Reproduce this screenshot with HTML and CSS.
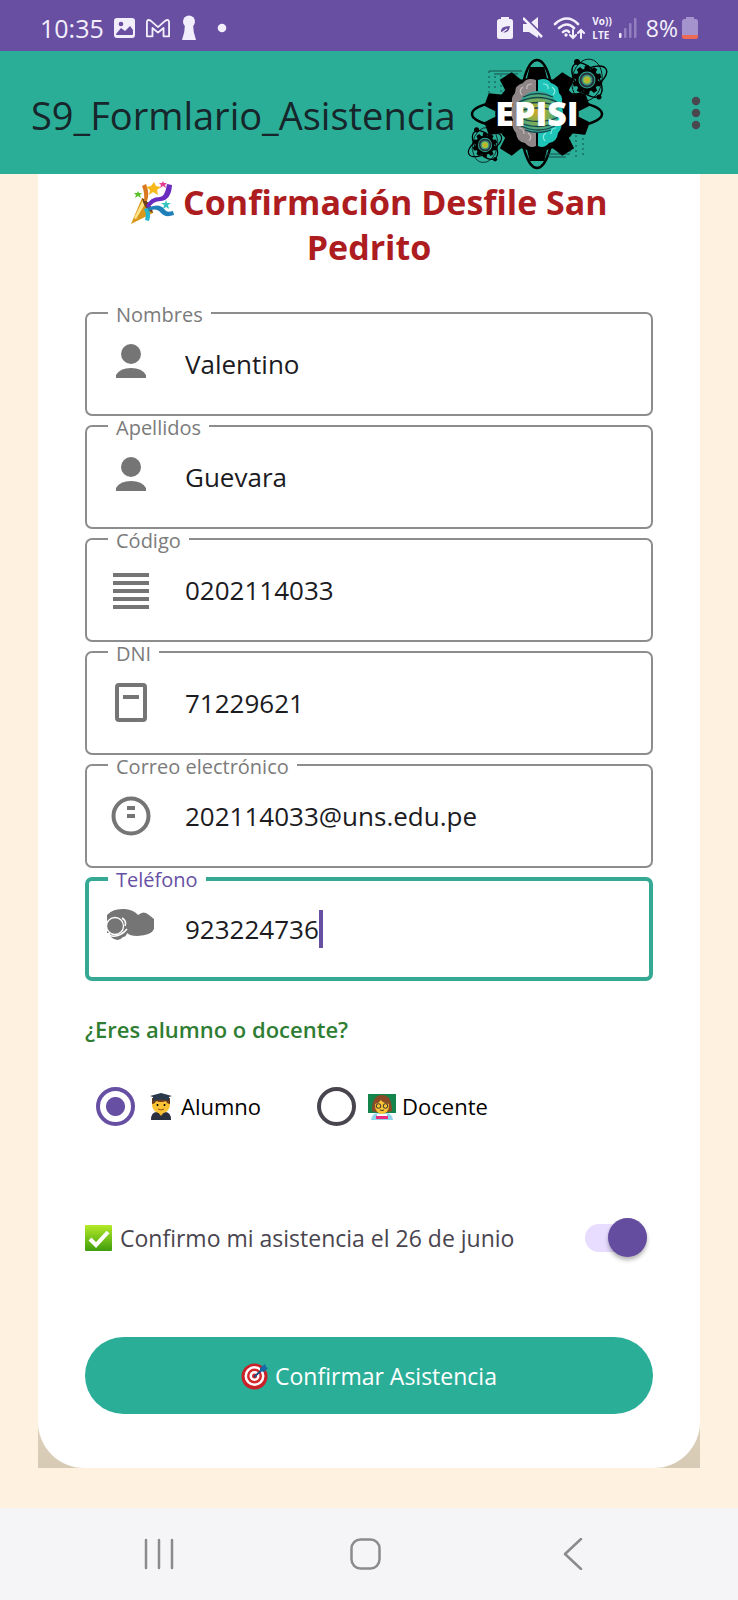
FILE: index.html
```html
<!DOCTYPE html>
<html lang="es">
<head>
<meta charset="utf-8">
<meta name="viewport" content="width=device-width, initial-scale=1">
<title>S9_Formlario_Asistencia</title>
<link rel="stylesheet" href="styles.css">
</head>
<body>
<div class="status-bar">
  <div class="status-left">
    <span class="clock">10:35</span>
    <svg class="st-image" width="22" height="22" viewBox="0 0 22 22"><rect x="0" y="1" width="21" height="20" rx="3" fill="#f3eefb"/><circle cx="7" cy="7" r="2.3" fill="#684fa2"/><path d="M2 17l5-6 4 3 5-5 3 4v4q0 1-1 1H3q-1 0-1-1z" fill="#684fa2"/></svg>
    <svg class="st-mail" width="24" height="22" viewBox="0 0 26 22"><path d="M1 5q0-4 4-2l8 7 8-7q4-2 4 2v15h-6v-9l-6 5-6-5v9H1z" fill="none" stroke="#f3eefb" stroke-width="2" stroke-linejoin="round"/></svg>
    <svg class="st-key" width="14" height="26" viewBox="0 0 14 26"><circle cx="7" cy="6.5" r="6" fill="#f3eefb"/><path d="M3 9h8q0 8 3 16H0q3-8 3-16z" fill="#f3eefb"/></svg>
    <svg width="10" height="10" viewBox="0 0 10 10"><circle cx="5" cy="5" r="4.3" fill="#f3eefb"/></svg>
  </div>
  <div class="status-right">
    <svg width="16" height="22" viewBox="0 0 16 22"><path d="M4 2V0h8v2h1.500q2.500 0 2.500 2.500v15q0 2.500-2.500 2.500h-11Q0 22 0 19.500v-15Q0 2 2.500 2z" fill="#f3eefb"/><path d="M4 15q-1-6 9-6-1 8-8 6z" fill="#684fa2"/><path d="M3 17l7-5" fill="none" stroke="#f3eefb" stroke-width="1.200"/></svg>
    <svg class="st-mute" width="20" height="22" viewBox="0 0 20 22"><path d="M0 7h6l9-7v21l-9-6H0z" fill="#f3eefb"/><path d="M1 0l20 20" stroke="#684fa2" stroke-width="3"/><path d="M0 1l19 19" stroke="#f3eefb" stroke-width="2.500"/></svg>
    <svg width="32" height="24" viewBox="0 0 32 24"><g fill="none" stroke="#f3eefb" stroke-width="2.600" stroke-linecap="round"><path d="M2 8q12-11 23 0M6 12q8-7 15 0M10 16q4-3 6 0"/><path d="M20 14v8m-3-3l3 3 3-3M28 22v-8m-3 3l3-3 3 3" stroke-width="2"/></g><circle cx="13" cy="19" r="1.700" fill="#f3eefb"/></svg>
    <span class="volte"><span>Vo))</span><span>LTE</span></span>
    <svg width="20" height="20" viewBox="0 0 20 20"><rect x="0" y="15" width="2.500" height="5" rx="1" fill="#f3eefb"/><g fill="#9480c0"><rect x="5" y="10" width="2.500" height="10" rx="1"/><rect x="10" y="5" width="2.500" height="15" rx="1"/><rect x="15" y="0" width="2.500" height="20" rx="1"/></g></svg>
    <span class="battery-text">8%</span>
    <svg width="16" height="22" viewBox="0 0 16 22"><path d="M4 2V0h8v2h1.500q2.500 0 2.500 2.500V19H0V4.500Q0 2 2.500 2z" fill="#a493cc"/><path d="M0 18h16v1.500q0 2.500-2.500 2.500h-11Q0 22 0 19.500z" fill="#ee6a55"/></svg>
  </div>
</div>

<header class="app-bar">
  <h1 class="app-title">S9_Formlario_Asistencia</h1>
  <svg class="logo" width="150" height="120" viewBox="0 0 150 120" role="img" aria-label="EPISI">
    <defs>
      <radialGradient id="glow"><stop offset="0" stop-color="#d6a61f"/><stop offset=".45" stop-color="#8fae48"/><stop offset="1" stop-color="#2fa79c"/></radialGradient>
      <path id="tooth" d="M-10-30L-6.500-47H6.500L10-30z"/>
      <g id="teeth"><use href="#tooth"/><use href="#tooth" transform="rotate(36)"/><use href="#tooth" transform="rotate(72)"/><use href="#tooth" transform="rotate(108)"/><use href="#tooth" transform="rotate(144)"/><use href="#tooth" transform="rotate(180)"/><use href="#tooth" transform="rotate(216)"/><use href="#tooth" transform="rotate(252)"/><use href="#tooth" transform="rotate(288)"/><use href="#tooth" transform="rotate(324)"/></g>
      <g id="atom">
        <g fill="none" stroke="#000" stroke-width="1.400"><ellipse rx="22" ry="10" transform="rotate(-30)"/><ellipse rx="20" ry="11" transform="rotate(52)"/><ellipse rx="21" ry="15" transform="rotate(100)" stroke-width=".8"/></g>
        <g transform="scale(.31)"><circle r="36"/><use href="#teeth"/></g>
        <circle r="8.500" fill="#2bae98"/><circle r="7.500" fill="#24343a"/><circle r="5.500" fill="#3f8d84"/><circle r="3.800" fill="#9fc23a"/><circle r="1.500" fill="#e3a020"/>
        <circle cx="-10" cy="-18" r="3"/><circle cx="12" cy="17" r="2.500"/>
      </g>
    </defs>
    <g fill="none" stroke="#000" stroke-width="2.500"><ellipse cx="73" cy="61" rx="17" ry="54"/><ellipse cx="73" cy="61" rx="65" ry="16"/></g>
    <g fill="none" stroke="#174f4a" stroke-width="1"><path d="M25 18h33M30 21h24M82 101h24M84 104h18"/><path d="M25 18v22M31 23v15M37 22v18M43 25v12M106 82v20M112 82v24M119 80v24" stroke-dasharray="2 3"/></g>
    <g transform="translate(73 61) scale(1.130 1)"><circle r="37"/><use href="#teeth"/></g>
    <path d="M72 27q-9-3-13 3-8 2-8 10-5 5-2 12-4 8 0 15-2 8 3 13 1 9 9 10 5 6 11 3z" fill="#8f8787"/>
    <path d="M74 27q9-3 13 3 8 2 8 10 5 5 2 12 4 8 0 15 2 8-3 13-1 9-9 10-5 6-11 3z" fill="#1fc4b8"/>
    <path d="M68 31q-6 0-5 5M59 34q-5 4-1 8M55 75q5 0 5 6M64 80q5 3 1 8" fill="none" stroke="#c5bebe" stroke-width="1.200"/>
    <path d="M79 31q6 0 5 5M88 34q5 4 1 8M92 75q-5 0-5 6M82 80q-5 3-1 8" fill="none" stroke="#8beae1" stroke-width="1.200"/>
    <circle cx="74" cy="59" r="21" fill="url(#glow)"/>
    <g fill="none" stroke="#17454a" stroke-width="1.300"><path d="M59 44q15-7 30 0M55 49q19-9 38 0M53 54q21-9 42 0M53 59q21-8 42 0M53 64q21 9 42 0M54 69q20 9 40 0M57 73q17 8 34 0M61 77q13 5 26 0"/></g>
    <text class="logo-text" x="73" y="73" text-anchor="middle">EPISI</text>
    <use href="#atom" transform="translate(123 27)"/>
    <use href="#atom" transform="translate(21 92) scale(.84)"/>
  </svg>
  <button class="menu-button" type="button" aria-label="Más opciones"><svg width="10" height="34" viewBox="0 0 10 34"><g fill="#4a474f"><circle cx="5" cy="5" r="4.200"/><circle cx="5" cy="17" r="4.200"/><circle cx="5" cy="29" r="4.200"/></g></svg></button>
</header>

<main class="page">
  <div class="card-shadow">
  <form class="card">
    <h2 class="heading"><svg class="party" width="44" height="44" viewBox="0 0 44 44"><path d="M1 43L12 17q9 5 11 15z" fill="#d99a1c"/><path d="M4 37l9-18 2 4L6 38z" fill="#ffe48a"/><path d="M12 17q9 4 11 15-9-3-11-15z" fill="#6e3f16"/><path d="M14 20q1-8-2-15l4-2q4 9 1 17z" fill="#d9791f"/><path d="M16 25q4-9 14-9 5 0 7-13l5 1q-1 15-11 16-9 0-12 8z" fill="#6a2bbf"/><path d="M17 27q13-6 18 2 2 3 8 1l1 4q-9 3-13-2-4-6-13-2z" fill="#1f7fb8"/><path d="M17 27q5 5 2 13l-4-1q2-6-1-11z" fill="#25b5cf"/><path d="M24 1l2 4 5 1-4 3 1 5-5-3-4 3 1-5-4-3 5-1z" fill="#f7b91a"/><path d="M33 0l1 2 3 0-2 2 1 3-3-2-3 2 1-3-2-2 3 0z" fill="#e63e91"/><path d="M8 10l1 2 3 0-2 2 1 3-3-2-3 2 1-3-2-2 3 0z" fill="#5cc22b"/><path d="M36 19l1 3 4 0-3 2 1 4-3-2-3 2 1-4-3-2 4 0z" fill="#33c3c0"/></svg> Confirmación Desfile San Pedrito</h2>

    <div class="fields">
      <div class="field"><label class="field-label" for="nombres">Nombres</label>
        <svg class="field-icon" viewBox="0 0 48 48"><circle cx="24" cy="14" r="10"/><path d="M9 38v-3q4-7 15-7t15 7v3z"/></svg>
        <input class="field-input" id="nombres" type="text" value="Valentino"></div>
      <div class="field"><label class="field-label" for="apellidos">Apellidos</label>
        <svg class="field-icon" viewBox="0 0 48 48"><circle cx="24" cy="14" r="10"/><path d="M9 38v-3q4-7 15-7t15 7v3z"/></svg>
        <input class="field-input" id="apellidos" type="text" value="Guevara"></div>
      <div class="field"><label class="field-label" for="codigo">Código</label>
        <svg class="field-icon" viewBox="0 0 48 48"><path d="M6 7h36v4H6zM6 15h36v4H6zM6 23h36v4H6zM6 31h36v4H6zM6 39h36v4H6z"/></svg>
        <input class="field-input" id="codigo" type="text" value="0202114033"></div>
      <div class="field"><label class="field-label" for="dni">DNI</label>
        <svg class="field-icon" viewBox="0 0 48 48"><rect x="10" y="6" width="28" height="35" rx="2" fill="none" stroke="#757575" stroke-width="4"/><path d="M16 16h16v4H16z"/></svg>
        <input class="field-input" id="dni" type="text" value="71229621"></div>
      <div class="field"><label class="field-label" for="correo">Correo electrónico</label>
        <svg class="field-icon" viewBox="0 0 48 48"><circle cx="24" cy="24" r="17.500" fill="none" stroke="#757575" stroke-width="4"/><path d="M20 14h8v4h-8zM20 22h8v4h-8z"/></svg>
        <input class="field-input" id="correo" type="email" value="202114033@uns.edu.pe"></div>
      <div class="field field-active"><label class="field-label" for="telefono">Teléfono</label>
        <svg class="field-icon" viewBox="0 0 48 48"><path d="M0 10Q6 3 18 4q9 1 13 6 6-5 11 0l5 4v10q-2 6-17 7-7 0-10-3-1 4-4 4-5 6-12 0l-1-4H0z"/><circle cx="8" cy="21" r="8.500" fill="none" stroke="#fff" stroke-width="1.300"/><path d="M0 30q12 4 20-6M15 13q5 3 3 8" fill="none" stroke="#fff" stroke-width="1.500"/></svg>
        <input class="field-input" id="telefono" type="tel" value="923224736"><span class="caret"></span></div>
    </div>

    <fieldset class="role">
      <legend class="role-title">¿Eres alumno o docente?</legend>
      <div class="role-options">
        <label class="role-option"><input class="radio" type="radio" name="rol" checked>
          <svg class="emoji" width="28" height="28" viewBox="0 0 28 28"><path d="M4 28q0-8 6-8h8q6 0 6 8z" fill="#2b3040"/><path d="M10 19h8l-4 5z" fill="#f0b42c"/><ellipse cx="14" cy="13" rx="9" ry="8.500" fill="#f9c335"/><path d="M5 12V6h18v6q-3 0-4-3-5 2-10 0-1 3-4 3z" fill="#6b3b1c"/><path d="M3 4l11-3 11 3-3 1v4q-8-3-16 0V5z" fill="#2b3a4a"/><circle cx="10.500" cy="13" r="1"/><circle cx="17.500" cy="13" r="1"/><path d="M11 17q3 2 6 0" fill="none" stroke="#94521c"/></svg>
          <span>Alumno</span></label>
        <label class="role-option"><input class="radio" type="radio" name="rol">
          <svg class="emoji" width="28" height="28" viewBox="0 0 28 28"><path d="M0 2h28v19H0z" fill="#13854c"/><path d="M4 19Q4 3 14 3t10 16q-10 4-20 0z" fill="#8a4a26"/><path d="M3 28q1-7 7-7h8q6 0 7 7z" fill="#8ed4ea"/><ellipse cx="14" cy="14" rx="7" ry="8" fill="#f9c335"/><path d="M7 12q0-6 7-7 7 1 7 7-6-1-8-4-2 3-6 4z" fill="#8a4a26"/><g fill="none" stroke="#333"><circle cx="10.500" cy="14" r="2.300"/><circle cx="17.500" cy="14" r="2.300"/><path d="M12 18q2 1 4 0"/></g><path d="M8 24h12v3H8z" fill="#ed2a7b"/><path d="M9 22h10v2H9z" fill="#fff"/></svg>
          <span>Docente</span></label>
      </div>
    </fieldset>

    <label class="confirm-row">
      <svg width="28" height="28" viewBox="0 0 28 28"><defs><linearGradient id="ok" x2="0" y2="1"><stop stop-color="#b4ea28"/><stop offset="1" stop-color="#3f9d0c"/></linearGradient></defs><rect y="1" width="27" height="26" rx="1" fill="url(#ok)"/><path d="M5 15l6 6L23 8" fill="none" stroke="#fff" stroke-width="4"/></svg>
      <span class="confirm-text">Confirmo mi asistencia el 26 de junio</span>
      <input class="switch" type="checkbox" role="switch" checked>
    </label>

    <button class="submit" type="button"><svg width="28" height="28" viewBox="0 0 28 28"><circle cx="13.500" cy="14.500" r="13" fill="#c92127"/><circle cx="13.500" cy="14" r="10" fill="#fff"/><circle cx="13.500" cy="14" r="7.500" fill="#d3272d"/><circle cx="13.500" cy="14" r="5" fill="#fff"/><circle cx="13.500" cy="14" r="2.500" fill="#d3272d"/><path d="M13 15L24 5" stroke="#1c4f83" stroke-width="2"/><path d="M19 9V6l5-4 1 3 2 1-4 4z" fill="#1768a6"/></svg>
      <span>Confirmar Asistencia</span></button>
  </form>
  </div>
</main>

<nav class="nav-bar">
  <button class="nav-button" type="button" aria-label="Recientes"><svg width="32" height="32" viewBox="0 0 32 32"><path d="M3 2v28M16 2v28M29 2v28"/></svg></button>
  <button class="nav-button" type="button" aria-label="Inicio"><svg width="32" height="32" viewBox="0 0 32 32"><rect x="1.500" y="1.500" width="28" height="29" rx="9"/></svg></button>
  <button class="nav-button" type="button" aria-label="Atrás"><svg width="32" height="32" viewBox="0 0 32 32"><path d="M24 1L8 16l16 15"/></svg></button>
</nav>
</body>
</html>
```
FILE: styles.css
```css
* { box-sizing: border-box; }
body {
  margin: 0;
  min-height: 100vh;
  display: flex;
  flex-direction: column;
  font-family: "Open Sans", "Noto Sans", sans-serif;
  font-size: 24px;
  color: #1c1b1f;
  background: #fff1df;
}
button, input { font: inherit; color: inherit; }
button { border: 0; padding: 0; background: none; }

.status-bar {
  height: 51px;
  padding: 4px 40px 0;
  display: flex;
  justify-content: space-between;
  align-items: center;
  background: #684fa2;
  color: #f3eefb;
}
.status-left, .status-right { display: flex; align-items: center; }
.status-left { gap: 10px; }
.clock { font-size: 25px; }
.st-key { margin: 0 11px 0 2px; }
.status-right { gap: 7px; }
.st-mute { margin: 0 3px; }
.volte {
  display: flex;
  flex-direction: column;
  font-size: 10px;
  font-weight: 700;
  line-height: 14px;
}
.battery-text { font-size: 23px; margin-right: -3px; }

.app-bar {
  height: 123px;
  padding: 0 37px 0 31px;
  display: flex;
  align-items: center;
  background: #2bae98;
}
.app-title {
  margin: 0;
  padding-top: 4px;
  font-size: 38px;
  font-weight: 400;
  line-height: 48px;
  color: #16262b;
}
.logo { flex: none; margin-left: 8px; }
.logo-text { font-size: 34px; font-weight: 800; fill: #fff; }
.menu-button { margin-left: auto; display: flex; }

.page { flex: 1; padding: 0 38px 38px; }
.card-shadow { background: linear-gradient(#fff1df 80%, #d6cab5); }
.card {
  padding: 6px 47px 54px;
  background: #fff;
  border-radius: 0 0 46px 46px;
}
.heading {
  margin: 0 0 42px;
  padding: 0 20px;
  font-size: 34px;
  font-weight: 700;
  line-height: 45px;
  text-align: center;
  color: #ad1d1f;
}
.party { vertical-align: -10px; }

.fields { display: flex; flex-direction: column; gap: 9px; }
.field {
  position: relative;
  height: 104px;
  padding: 0 28px 0 20px;
  display: flex;
  align-items: center;
  border: 2px solid #8d8d8d;
  border-radius: 7px;
}
.field-label {
  position: absolute;
  top: -10px;
  left: 21px;
  padding: 0 8px;
  font-size: 20px;
  line-height: 22px;
  color: #7b7b7b;
  background: #fff;
}
.field-icon { flex: none; width: 48px; height: 48px; margin-right: 30px; fill: #757575; }
.field-input {
  flex: 1;
  min-width: 0;
  padding: 0;
  border: 0;
  outline: 0;
  background: none;
  font-size: 26px;
  line-height: 36px;
}
.field-active { border: 4px solid #36a994; padding: 0 26px 0 18px; }
.field-active .field-label { top: -12px; left: 19px; color: #6750a4; }
.field-active .field-input { flex: none; field-sizing: content; }
.caret { width: 4px; height: 38px; background: #6750a4; }

.role { margin: 0; padding: 0; border: 0; min-width: 0; }
.role-title { padding: 31px 0 0; font-size: 22px; font-weight: 600; line-height: 34px; color: #2e7d32; }
.role-options { display: flex; gap: 56px; padding: 40px 0 0 11px; }
.role-option { display: flex; align-items: center; font-size: 22px; line-height: 40px; color: #000; }
.emoji { margin: 0 6px 0 12px; }
.radio {
  appearance: none;
  width: 39px;
  height: 39px;
  margin: 0;
  border: 4px solid #49454f;
  border-radius: 50%;
}
.radio:checked { border-color: #6750a4; background: radial-gradient(circle, #6750a4 9px, transparent 10px); }

.confirm-row { display: flex; align-items: center; margin-top: 92px; padding-right: 6px; color: #49454f; }
.confirm-text { margin-left: 7px; font-size: 23px; line-height: 40px; }
.switch {
  appearance: none;
  position: relative;
  width: 62px;
  height: 28px;
  margin: 0 0 0 auto;
  border-radius: 14px;
  background: #e8ddff;
}
.switch::after {
  content: "";
  position: absolute;
  top: -6px;
  right: 0;
  width: 39px;
  height: 39px;
  border-radius: 50%;
  background: #644c9f;
  box-shadow: 0 3px 4px rgba(0, 0, 0, .3);
}

.submit {
  width: 100%;
  height: 77px;
  margin-top: 79px;
  display: flex;
  justify-content: center;
  align-items: center;
  gap: 6px;
  border-radius: 39px;
  background: #2bae98;
  color: #fff;
  font-size: 23px;
}

.nav-bar { height: 92px; padding: 0 62px 0 56px; display: flex; justify-content: space-between; align-items: center; background: #f5f5f8; }
.nav-button { width: 206px; display: flex; justify-content: center; }
.nav-button svg { fill: none; stroke: #8b8b8e; stroke-width: 2.5; stroke-linecap: round; stroke-linejoin: round; }
```
